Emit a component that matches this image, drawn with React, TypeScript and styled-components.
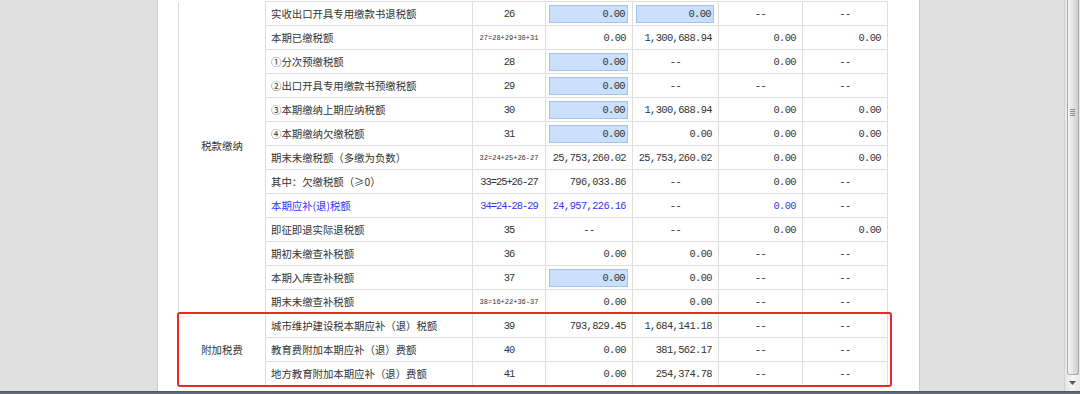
import React from "react"
import styled, { createGlobalStyle } from "styled-components"

type Cell = string | { input: string }

type Row = {
    label: string
    no: string
    small?: boolean
    blue?: boolean
    values: Cell[]
}

const taxRows: Row[] = [
    { label: "实收出口开具专用缴款书退税额", no: "26", values: [{ input: "0.00" }, { input: "0.00" }, "--", "--"] },
    { label: "本期已缴税额", no: "27=28+29+30+31", small: true, values: ["0.00", "1,300,688.94", "0.00", "0.00"] },
    { label: "①分次预缴税额", no: "28", values: [{ input: "0.00" }, "--", "0.00", "--"] },
    { label: "②出口开具专用缴款书预缴税额", no: "29", values: [{ input: "0.00" }, "--", "--", "--"] },
    { label: "③本期缴纳上期应纳税额", no: "30", values: [{ input: "0.00" }, "1,300,688.94", "0.00", "0.00"] },
    { label: "④本期缴纳欠缴税额", no: "31", values: [{ input: "0.00" }, "0.00", "0.00", "0.00"] },
    { label: "期末未缴税额（多缴为负数）", no: "32=24+25+26-27", small: true, values: ["25,753,260.02", "25,753,260.02", "0.00", "0.00"] },
    { label: "其中：欠缴税额（≥0）", no: "33=25+26-27", values: ["796,033.86", "--", "0.00", "--"] },
    { label: "本期应补(退)税额", no: "34=24-28-29", blue: true, values: ["24,957,226.16", "--", "0.00", "--"] },
    { label: "即征即退实际退税额", no: "35", values: ["--", "--", "0.00", "0.00"] },
    { label: "期初未缴查补税额", no: "36", values: ["0.00", "0.00", "--", "--"] },
    { label: "本期入库查补税额", no: "37", values: [{ input: "0.00" }, "0.00", "--", "--"] },
    { label: "期末未缴查补税额", no: "38=16+22+36-37", small: true, values: ["0.00", "0.00", "--", "--"] },
]

const extraRows: Row[] = [
    { label: "城市维护建设税本期应补（退）税额", no: "39", values: ["793,829.45", "1,684,141.18", "--", "--"] },
    { label: "教育费附加本期应补（退）费额", no: "40", values: ["0.00", "381,562.17", "--", "--"] },
    { label: "地方教育附加本期应补（退）费额", no: "41", values: ["0.00", "254,374.78", "--", "--"] },
]

const GlobalStyle = createGlobalStyle`
    html, body {
        margin: 0;
        padding: 0;
    }
    body {
        width: 1080px;
        height: 394px;
        overflow: hidden;
        background: #e0e0e0;
    }
`

const Screen = styled.div`
    display: flex;
    flex-direction: column;
    width: 1080px;
    height: 394px;
`

const Main = styled.div`
    display: flex;
    height: 391px;
    overflow: hidden;
`

const Gutter = styled.div<{ $width?: number }>`
    flex: ${p => (p.$width ? `0 0 ${p.$width}px` : "1 1 auto")};
    background: #e0e0e0;
`

const Panel = styled.div`
    flex: 0 0 763px;
    box-sizing: border-box;
    background: #fff;
    border-left: 1px solid #cdcdcd;
    border-right: 1px solid #cdcdcd;
    padding: 1px 0 0 20px;
    overflow: hidden;
`

const TableWrap = styled.div`
    position: relative;
    width: 709px;
`

const Table = styled.table`
    border-collapse: collapse;
    table-layout: fixed;
    width: 709px;
    font-family: "Noto Sans CJK SC", "Noto Sans", sans-serif;
    font-size: 10.4px;
    color: #333;

    td {
        border: 1px solid #dedede;
        padding: 0;
        height: 23px;
        white-space: nowrap;
        overflow: hidden;
    }
`

/* the tax group starts above the visible part: no top line, label sits higher */
const CategoryCell = styled.td<{ $lift?: number }>`
    text-align: center;
    vertical-align: middle;
    padding-bottom: ${p => p.$lift ?? 0}px !important;
    ${p => (p.$lift ? "border-top: none !important;" : "")}
`

const LabelCell = styled.td<{ $blue?: boolean }>`
    padding-left: 5px !important;
    color: ${p => (p.$blue ? "#3535ee" : "#333")};
`

const NoCell = styled.td<{ $small?: boolean; $blue?: boolean }>`
    text-align: center;
    font-family: "Liberation Mono", "DejaVu Sans Mono", monospace;
    font-size: ${p => (p.$small ? "7px" : "10.4px")};
    letter-spacing: ${p => (p.$small ? "0" : "-1px")};
    color: ${p => (p.$blue ? "#3535ee" : "#333")};
`

const ValueCell = styled.td<{ $blue?: boolean; $dash?: boolean }>`
    text-align: ${p => (p.$dash ? "center" : "right")};
    padding-right: ${p => (p.$dash ? "0" : "6px")} !important;
    font-family: "Liberation Mono", "DejaVu Sans Mono", monospace;
    letter-spacing: -0.6px;
    color: ${p => (p.$blue ? "#3535ee" : "#333")};
`

const InputCell = styled.td`
    padding: 0 4px 0 3px !important;
`

const InputBox = styled.div`
    box-sizing: border-box;
    height: 18px;
    line-height: 16px;
    background: #c9dffa;
    border: 1px solid #9fc4ee;
    text-align: right;
    padding-right: 2px;
    font-family: "Liberation Mono", "DejaVu Sans Mono", monospace;
    letter-spacing: -0.6px;
    color: #333;
`

const Highlight = styled.div`
    position: absolute;
    top: 311px;
    left: -1px;
    width: 715px;
    height: 75px;
    box-sizing: border-box;
    border: 2px solid #ea2a2a;
    border-radius: 3px;
    pointer-events: none;
`

const ScrollTrack = styled.div`
    flex: 0 0 16px;
    box-sizing: border-box;
    display: flex;
    flex-direction: column;
    align-items: center;
    background: linear-gradient(to right, #e6e6e6, #f4f4f4 50%, #e8e8e8);
    border-left: 1px solid #d2d2d2;
`

const Thumb = styled.div`
    box-sizing: border-box;
    width: 12px;
    height: 375px;
    border: 1px solid #a9a9a9;
    border-top: none;
    border-radius: 0 0 3px 3px;
    background: linear-gradient(to right, #f6f6f6, #e2e2e2 50%, #cfcfcf);
    display: flex;
    justify-content: center;
    padding-top: 109px;
`

const Grip = styled.div`
    width: 5px;
    height: 7px;
    background: repeating-linear-gradient(to bottom, #8a8a8a 0 1px, transparent 1px 2px);
`

const ArrowButton = styled.div`
    flex: 1;
    display: flex;
    align-items: center;
    justify-content: center;
`

const BottomBar = styled.div`
    height: 3px;
    background: linear-gradient(to bottom, #4d5258, #6e7a88);
`

function Value({ cell, blue }: { cell: Cell; blue?: boolean }) {
    if (typeof cell !== "string") {
        return (
            <InputCell>
                <InputBox>{cell.input}</InputBox>
            </InputCell>
        )
    }
    return <ValueCell $blue={blue && cell !== "--"} $dash={cell === "--"}>{cell}</ValueCell>
}

function TableRow({ row, category, span, lift }: { row: Row; category?: string; span?: number; lift?: number }) {
    return (
        <tr>
            {category && <CategoryCell rowSpan={span} $lift={lift}>{category}</CategoryCell>}
            <LabelCell $blue={row.blue}>{row.label}</LabelCell>
            <NoCell $small={row.small} $blue={row.blue}>{row.no}</NoCell>
            {row.values.map((v, i) => (
                <Value key={i} cell={v} blue={row.blue} />
            ))}
        </tr>
    )
}

export default function App() {
    return (
        <Screen>
            <GlobalStyle />
            <Main>
                <Gutter $width={157} />
                <Panel>
                    <TableWrap>
                        <Table>
                            <colgroup>
                                <col style={{ width: 87 }} />
                                <col style={{ width: 207 }} />
                                <col style={{ width: 73 }} />
                                <col style={{ width: 87 }} />
                                <col style={{ width: 86 }} />
                                <col style={{ width: 84 }} />
                                <col style={{ width: 85 }} />
                            </colgroup>
                            <tbody>
                                {taxRows.map((r, i) => (
                                    <TableRow
                                        key={r.no}
                                        row={r}
                                        category={i === 0 ? "税款缴纳" : undefined}
                                        span={taxRows.length}
                                        lift={24}
                                    />
                                ))}
                                {extraRows.map((r, i) => (
                                    <TableRow
                                        key={r.no}
                                        row={r}
                                        category={i === 0 ? "附加税费" : undefined}
                                        span={extraRows.length}
                                    />
                                ))}
                            </tbody>
                        </Table>
                        <Highlight />
                    </TableWrap>
                </Panel>
                <Gutter />
                <ScrollTrack>
                    <Thumb>
                        <Grip />
                    </Thumb>
                    <ArrowButton>
                        <svg width="7" height="4" viewBox="0 0 7 4">
                            <polygon points="0,0 7,0 3.5,4" fill="#555" />
                        </svg>
                    </ArrowButton>
                </ScrollTrack>
            </Main>
            <BottomBar />
        </Screen>
    )
}
